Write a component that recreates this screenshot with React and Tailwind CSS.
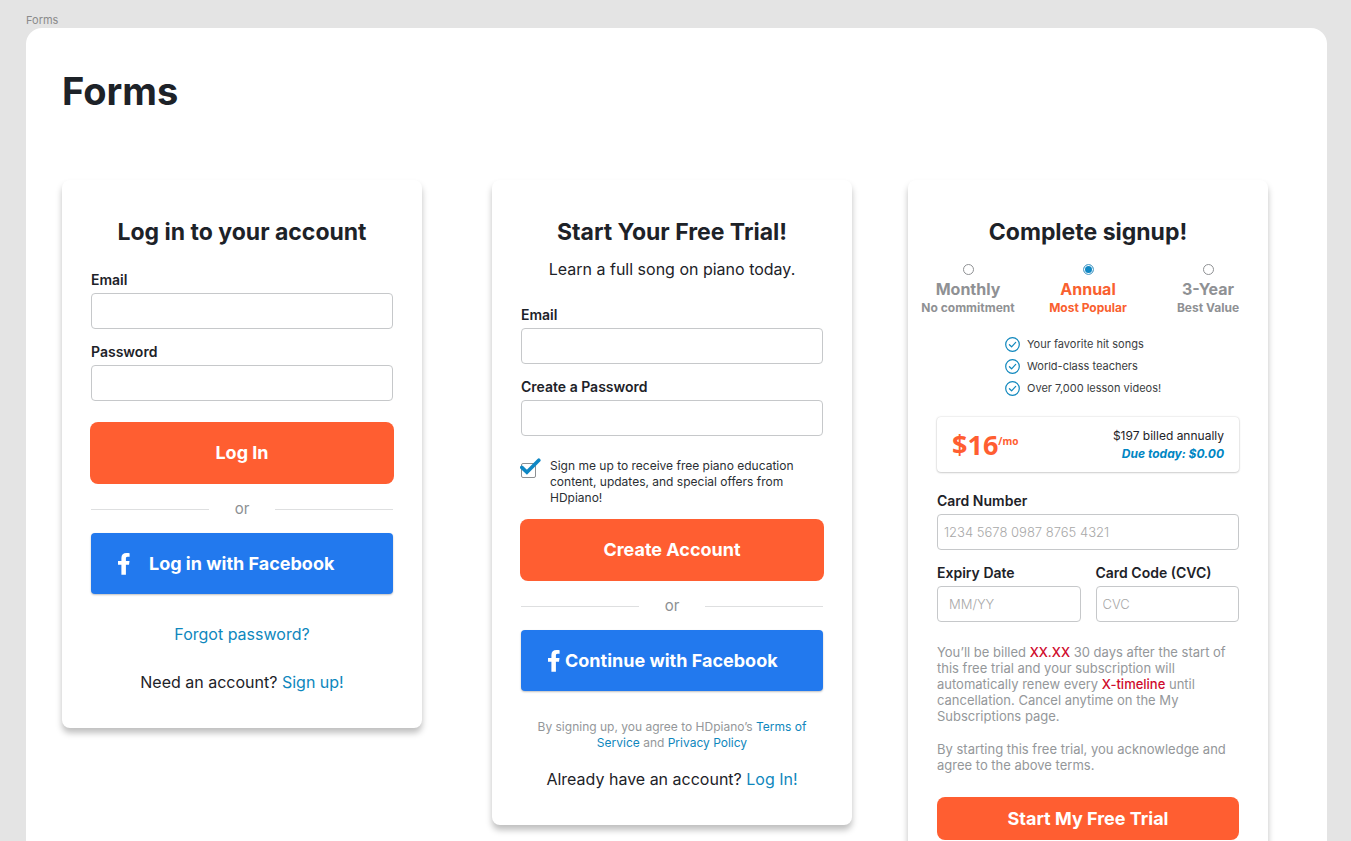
import React from "react";

function Card({ children, className = "" }) {
  return (
    <section
      className={`w-full max-w-[360px] min-w-0 rounded-lg bg-white px-[29px] pt-9 pb-[34px] shadow-[0_5px_6px_rgba(0,0,0,0.25)] ${className}`}
    >
      {children}
    </section>
  );
}

function CardTitle({ children }) {
  return <h2 className="text-center text-[23px] leading-8 font-bold whitespace-nowrap">{children}</h2>;
}

function Field({ id, label, className = "", inputClass = "px-1.5", ...rest }) {
  return (
    <div className={className}>
      <label htmlFor={id} className="block text-sm leading-5 font-semibold">
        {label}
      </label>
      <input
        id={id}
        className={`mt-[3px] block h-9 w-full rounded-[4px] border border-[#c6c8ca] bg-white text-[13px] font-light placeholder:text-[#a8a8a8] focus:outline-[#0086c3] ${inputClass}`}
        {...rest}
      />
    </div>
  );
}

function PrimaryButton({ children, className = "" }) {
  return (
    <button
      type="submit"
      className={`block rounded-lg bg-[#ff5e31] text-center text-lg font-bold text-white ${className}`}
    >
      {children}
    </button>
  );
}

function OrDivider() {
  return (
    <div className="mt-[13px] flex h-6 items-center gap-[26px] text-[15px] text-[#8d9093]">
      <span className="h-px flex-1 bg-[#dedfe0]" />
      <span>or</span>
      <span className="h-px flex-1 bg-[#dedfe0]" />
    </div>
  );
}

function FacebookButton({ children, className }) {
  return (
    <button
      type="button"
      className={`mt-3 flex h-[61px] w-full items-center rounded-[4px] bg-[#2279ee] pl-[27px] text-lg font-bold whitespace-nowrap text-white shadow-[0_1px_2px_rgba(0,0,0,0.25)] ${className}`}
    >
      <svg width="12" height="22" viewBox="0 0 12 22" fill="currentColor" aria-hidden="true">
        <path d="M11.6 0.2V3.8H9.6C8.2 3.8 7.9 4.5 7.9 5.6V8H11.5L11 11.8H7.9V21.8H3.4V11.8H0V8H3.4V4.9C3.4 1.8 5.3 0 8.6 0C10 0 11.2 0.1 11.6 0.2Z" />
      </svg>
      {children}
    </button>
  );
}

function TextLink({ children }) {
  return (
    <a href="#" className="text-[#0f87bd]">
      {children}
    </a>
  );
}

function LoginCard() {
  return (
    <Card className="mr-[70px]">
      <form onSubmit={(e) => e.preventDefault()}>
        <CardTitle>Log in to your account</CardTitle>
        <Field id="login-email" label="Email" type="email" className="mt-[22px]" />
        <Field id="login-password" label="Password" type="password" className="mt-[13px]" />
        <PrimaryButton className="-mx-px mt-[21px] h-[62px] w-[calc(100%+2px)]">Log In</PrimaryButton>
        <OrDivider />
        <FacebookButton className="gap-[19px]">Log in with Facebook</FacebookButton>
        <p className="mt-7 text-center text-base leading-6">
          <TextLink>Forgot password?</TextLink>
        </p>
        <p className="mt-6 text-center text-base leading-6">
          Need an account? <TextLink>Sign up!</TextLink>
        </p>
      </form>
    </Card>
  );
}

function TrialCard() {
  return (
    <Card className="mr-14">
      <form onSubmit={(e) => e.preventDefault()}>
        <CardTitle>Start Your Free Trial!</CardTitle>
        <p className="mt-[9px] text-center text-base leading-6">Learn a full song on piano today.</p>
        <Field id="trial-email" label="Email" type="email" className="mt-6" />
        <Field id="trial-password" label="Create a Password" type="password" className="mt-[13px]" />
        <div className="mt-[22px] flex items-start gap-[14px]">
          <span className="relative mt-[5px] block size-[15px] shrink-0">
            <input
              id="trial-news"
              type="checkbox"
              defaultChecked
              className="peer block size-[15px] appearance-none rounded-[2px] border border-[#8d9093] bg-white"
            />
            <svg
              className="pointer-events-none absolute -top-[5px] -left-px hidden peer-checked:block"
              width="21"
              height="18"
              viewBox="0 0 21 18"
              fill="none"
              stroke="#0f87c4"
              strokeWidth="3.6"
              aria-hidden="true"
            >
              <path d="M1.8 9.4L6.9 14.2L18.8 2.2" strokeLinecap="round" />
            </svg>
          </span>
          <label htmlFor="trial-news" className="text-xs leading-4 text-[#2b2f34]">
            Sign me up to receive free piano education content, updates, and special offers from HDpiano!
          </label>
        </div>
        <PrimaryButton className="-mx-px mt-[13px] h-[62px] w-[calc(100%+2px)]">Create Account</PrimaryButton>
        <OrDivider />
        <FacebookButton className="gap-[5px]">Continue with Facebook</FacebookButton>
        <p className="mt-7 px-2 text-center text-xs leading-4 text-[#94979a]">
          By signing up, you agree to HDpiano’s <TextLink>Terms of Service</TextLink> and{" "}
          <TextLink>Privacy Policy</TextLink>
        </p>
        <p className="mt-4 text-center text-base leading-6">
          Already have an account? <TextLink>Log In!</TextLink>
        </p>
      </form>
    </Card>
  );
}

const plans = [
  { id: "monthly", name: "Monthly", note: "No commitment" },
  { id: "annual", name: "Annual", note: "Most Popular" },
  { id: "three-year", name: "3-Year", note: "Best Value" },
];

const perks = ["Your favorite hit songs", "World-class teachers", "Over 7,000 lesson videos!"];

function Perk({ children }) {
  return (
    <li className="flex h-[22px] items-center gap-[7px]">
      <svg width="15" height="15" viewBox="0 0 15 15" fill="none" stroke="#0f87bd" aria-hidden="true">
        <circle cx="7.5" cy="7.5" r="6.8" strokeWidth="1.2" />
        <path d="M4.4 7.7L6.6 9.8L10.7 5.4" strokeWidth="1.2" strokeLinecap="round" strokeLinejoin="round" />
      </svg>
      {children}
    </li>
  );
}

function SignupCard() {
  return (
    <Card>
      <form onSubmit={(e) => e.preventDefault()}>
        <CardTitle>Complete signup!</CardTitle>
        <fieldset aria-label="Plan" className="-mx-[29px] mt-4 grid grid-cols-3">
          {plans.map((plan) => (
            <label
              key={plan.id}
              htmlFor={plan.id}
              className="flex flex-col items-center text-[#8f9194] has-checked:text-[#f9602f]"
            >
              <input
                id={plan.id}
                type="radio"
                name="plan"
                defaultChecked={plan.id === "annual"}
                className="block size-[11px] appearance-none rounded-full border border-[#8f9194] bg-white checked:border-[#6aa9cc] checked:bg-[#0f87c4] checked:shadow-[inset_0_0_0_1px_white]"
              />
              <span className="mt-[3px] text-base leading-[23px] font-bold">{plan.name}</span>
              <span className="text-xs leading-[14px] font-bold">{plan.note}</span>
            </label>
          ))}
        </fieldset>
        <ul className="mx-auto mt-[18px] w-[166px] text-[11px] whitespace-nowrap text-[#3a3d41]">
          {perks.map((perk) => (
            <Perk key={perk}>{perk}</Perk>
          ))}
        </ul>
        <div className="mt-[18px] flex h-[55px] items-center justify-between rounded-[4px] px-[15px] shadow-[0_0_2px_rgba(0,0,0,0.2),0_1px_2px_rgba(0,0,0,0.15)]">
          <p className="flex items-start font-['Noto_Sans','Open_Sans',sans-serif] font-bold text-[#ff5e31]">
            <span className="text-[27px] leading-8">$16</span>
            <span className="text-[10px] leading-6">/mo</span>
          </p>
          <div className="text-right text-xs leading-[18px]">
            <p>$197 billed annually</p>
            <p className="font-bold text-[#0086c3] italic">Due today: $0.00</p>
          </div>
        </div>
        <Field
          id="card-number"
          label="Card Number"
          placeholder="1234 5678 0987 8765 4321"
          inputMode="numeric"
          className="mt-[19px]"
        />
        <div className="mt-[13px] grid grid-cols-2 gap-[15px]">
          <Field id="expiry" label="Expiry Date" placeholder="MM/YY" inputClass="px-[11px]" />
          <Field id="cvc" label="Card Code (CVC)" placeholder="CVC" />
        </div>
        <p className="mt-[22px] text-[13px] leading-4 text-[#94979a]">
          You’ll be billed <span className="font-medium text-[#cf0a2c]">XX.XX</span> 30 days after the start of this
          free trial and your subscription will automatically renew every{" "}
          <span className="font-medium text-[#cf0a2c]">X-timeline</span> until cancellation. Cancel anytime on the My
          Subscriptions page.
        </p>
        <p className="mt-[17px] text-[13px] leading-4 text-[#94979a]">
          By starting this free trial, you acknowledge and agree to the above terms.
        </p>
        <PrimaryButton className="mt-6 h-[43px] w-full">Start My Free Trial</PrimaryButton>
      </form>
    </Card>
  );
}

export default function App() {
  return (
    <div className="min-h-screen bg-[#e4e4e4] px-6 pt-3 pb-6 pl-[26px] font-['Inter','Liberation_Sans',sans-serif] text-[#1d2228]">
      <p className="text-[11px] leading-4 text-[#8b8b8b]">Forms</p>
      <main className="rounded-2xl bg-white px-9 pt-9 pb-20">
        <h1 className="text-[38px] leading-[54px] font-bold">Forms</h1>
        <div className="mt-[62px] flex items-start">
          <LoginCard />
          <TrialCard />
          <SignupCard />
        </div>
      </main>
    </div>
  );
}
